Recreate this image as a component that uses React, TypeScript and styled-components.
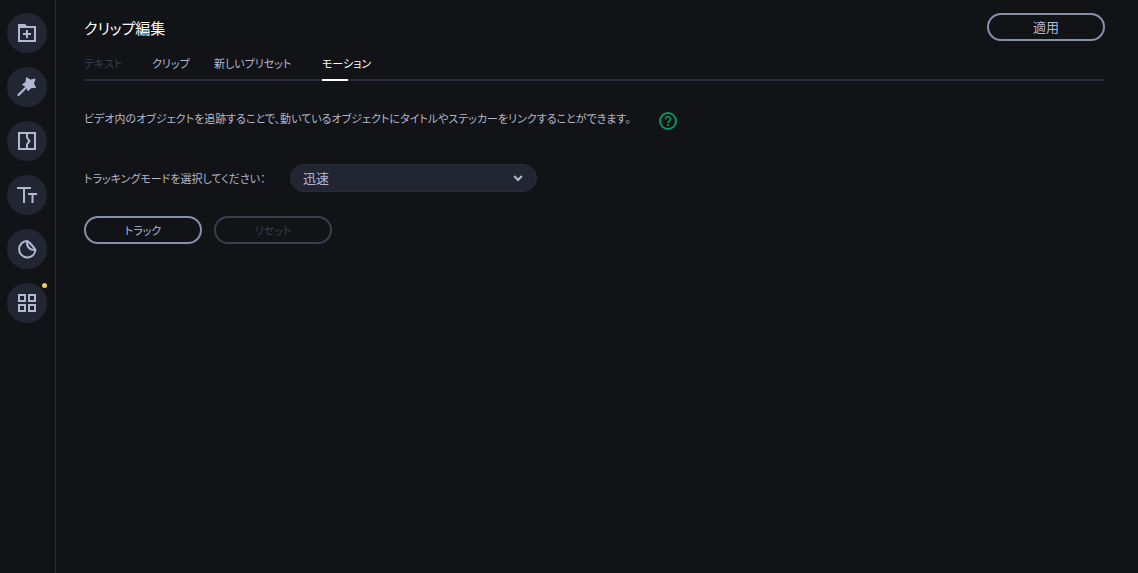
import React, { useState } from 'react';
import styled, { createGlobalStyle } from 'styled-components';

const GlobalStyle = createGlobalStyle`
  * { box-sizing: border-box; }
  body {
    margin: 0;
    background: #121316;
    color: #b4b7cc;
    font-family: "Noto Sans CJK JP", sans-serif;
    font-size: 11px;
    font-weight: 400;
    line-height: 16px;
    font-feature-settings: "palt";
  }
  button, select { font: inherit; font-feature-settings: inherit; color: inherit; }
`;

const Shell = styled.div`
  display: flex;
  min-height: 100vh;
`;

const Sidebar = styled.nav`
  display: flex;
  flex: none;
  flex-direction: column;
  gap: 14px;
  padding: 13px 8px 13px 7px;
  border-right: 1px solid #2c2d39;
`;

const ToolButton = styled.button`
  position: relative;
  display: grid;
  place-items: center;
  width: 40px;
  height: 40px;
  padding: 0;
  border: 0;
  border-radius: 50%;
  background: #222632;
  color: #b4b7d2;
`;

const Dot = styled.span`
  position: absolute;
  top: 0;
  right: 0;
  width: 5px;
  height: 5px;
  border-radius: 50%;
  background: #f2cb5a;
`;

const Main = styled.main`
  flex: 1;
  min-width: 0;
  padding: 13px 33px 24px 28px;
`;

const Header = styled.header`
  display: flex;
  align-items: center;
  justify-content: space-between;
`;

const Title = styled.h1`
  margin: 0;
  padding-top: 2px;
  color: #ffffff;
  font-size: 15px;
  font-weight: 400;
  line-height: 24px;
`;

const PillButton = styled.button<{ $large?: boolean }>`
  width: 118px;
  height: 28px;
  padding: 0;
  border: 2px solid #8a8fa9;
  border-radius: 14px;
  background: transparent;
  color: #b4b7d2;
  font-size: ${({ $large }) => ($large ? '13px' : '11px')};

  &:disabled {
    border-color: #393e4f;
    color: #393e4f;
  }
`;

const Tabs = styled.div`
  display: grid;
  grid-template-columns: 68px 62px 108px auto;
  justify-content: start;
  margin-top: 12px;
  border-bottom: 2px solid #292c38;
`;

const Tab = styled.button<{ $active?: boolean }>`
  position: relative;
  height: 26px;
  padding: 0 0 6px;
  border: 0;
  background: transparent;
  color: ${({ $active }) => ($active ? '#ffffff' : '#b4b7d2')};
  text-align: left;
  white-space: nowrap;

  &:disabled { color: #393e4f; }

  &::after {
    content: "";
    display: ${({ $active }) => ($active ? 'block' : 'none')};
    position: absolute;
    bottom: -2px;
    left: 0;
    width: 26px;
    height: 2px;
    background: #ffffff;
  }
`;

const Intro = styled.div`
  display: flex;
  gap: 28px;
  margin-top: 29px;
`;

const Description = styled.p`
  margin: 0;
`;

const HelpButton = styled.button`
  flex: none;
  width: 18px;
  height: 18px;
  margin-top: 2px;
  padding: 0;
  border: 0;
  background: transparent;
  color: #0c9460;

  svg { display: block; }
`;

const Field = styled.div`
  display: grid;
  grid-template-columns: 206px 247px;
  align-items: center;
  margin-top: 34px;
`;

const SelectBox = styled.div`
  position: relative;
`;

const Select = styled.select`
  display: block;
  width: 100%;
  height: 28px;
  padding: 0 32px 0 12px;
  border: 1px solid #292d3a;
  border-radius: 14px;
  background: #222632;
  color: #b4b7d2;
  font-size: 13px;
  appearance: none;
`;

const Chevron = styled.svg`
  position: absolute;
  top: 11px;
  right: 14px;
  pointer-events: none;
`;

const Actions = styled.div`
  display: flex;
  gap: 12px;
  margin-top: 24px;
`;

const Icon = ({ children }: { children: React.ReactNode }) => (
  <svg width="24" height="24" viewBox="0 0 24 24" fill="none" stroke="currentColor" strokeWidth="2" aria-hidden="true">
    {children}
  </svg>
);

const tools = [
  {
    label: 'メディアの追加',
    icon: (
      <>
        <path d="M4 6H20V20H4Z" />
        <path d="M3 3H10L12 5V7H3Z" fill="currentColor" stroke="none" />
        <path d="M12 9V17M8 13H16" />
      </>
    ),
  },
  {
    label: 'フィルター',
    icon: (
      <>
        <path d="M13 10.500L3.500 20" strokeWidth="2.200" strokeLinecap="round" />
        <path
          d="M20 4L18.500 8.600L20.600 12.500L16.100 12.700L13 15.800L11.500 11.700L7.500 9.700L11 7L11.600 2.600L15.300 5.100Z"
          fill="currentColor"
          strokeWidth="1"
          strokeLinejoin="round"
        />
      </>
    ),
  },
  {
    label: 'トランジション',
    icon: (
      <>
        <path d="M4 4H20V20H4Z" />
        <path d="M12 4V8.500L14.500 12L12 15.500V20" />
        <path d="M12 8L15 12L12 16L13 12Z" fill="currentColor" stroke="none" />
      </>
    ),
  },
  { label: 'タイトル', icon: <path d="M2 5H16M9 5V20M13 11H22M17.500 11V20" /> },
  {
    label: 'ステッカー',
    icon: (
      <>
        <path d="M12 4A8.200 8.200 0 1 0 20.500 13C18 9 16 6 12 4Z" strokeLinejoin="round" />
        <path d="M12 4C11.500 9.500 14.500 13.500 20.500 13" />
      </>
    ),
  },
  {
    label: 'その他のツール',
    badge: true,
    icon: <path d="M4 4H10V10H4ZM14 4H20V10H14ZM4 14H10V20H4ZM14 14H20V20H14Z" />,
  },
];

const tabs = ['テキスト', 'クリップ', '新しいプリセット', 'モーション'];

export default function App() {
  const [active, setActive] = useState(3);

  return (
    <>
      <GlobalStyle />
      <Shell>
        <Sidebar>
          {tools.map(({ label, icon, badge }) => (
            <ToolButton key={label} type="button" aria-label={label}>
              <Icon>{icon}</Icon>
              {badge && <Dot />}
            </ToolButton>
          ))}
        </Sidebar>
        <Main>
          <Header>
            <Title>クリップ編集</Title>
            <PillButton type="button" $large>適用</PillButton>
          </Header>
          <Tabs role="tablist">
            {tabs.map((name, i) => (
              <Tab
                key={name}
                type="button"
                role="tab"
                disabled={i === 0}
                aria-selected={i === active}
                $active={i === active}
                onClick={() => setActive(i)}
              >
                {name}
              </Tab>
            ))}
          </Tabs>
          <Intro>
            <Description>
              ビデオ内のオブジェクトを追跡することで、動いているオブジェクトにタイトルやステッカーをリンクすることができます。
            </Description>
            <HelpButton type="button" aria-label="ヘルプ">
              <svg width="18" height="18" viewBox="0 0 18 18" fill="none" stroke="currentColor" strokeWidth="2">
                <circle cx="9" cy="9" r="8" />
                <path d="M6.500 7.500C6.500 4 11.500 4 11.500 7C11.500 8.700 9 8.800 9 11" strokeWidth="1.600" />
                <path d="M9 12V14" strokeWidth="1.800" />
              </svg>
            </HelpButton>
          </Intro>
          <Field>
            <label htmlFor="tracking-mode">トラッキングモードを選択してください：</label>
            <SelectBox>
              <Select id="tracking-mode" defaultValue="fast">
                <option value="fast">迅速</option>
              </Select>
              <Chevron width="10" height="7" viewBox="0 0 10 7" fill="none" stroke="#b4b7d2" strokeWidth="2.200">
                <path d="M1.200 1L5 5L8.800 1" />
              </Chevron>
            </SelectBox>
          </Field>
          <Actions>
            <PillButton type="button">トラック</PillButton>
            <PillButton type="button" disabled>リセット</PillButton>
          </Actions>
        </Main>
      </Shell>
    </>
  );
}
